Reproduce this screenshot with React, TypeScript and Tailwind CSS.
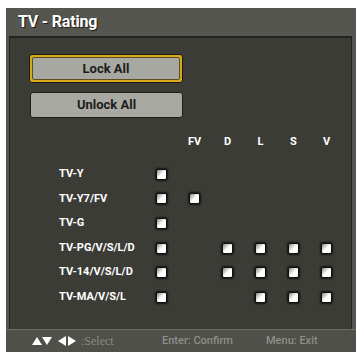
import React from "react";

const font = { fontFamily: '"Roboto", "Liberation Sans", sans-serif' };

function Box() {
  return (
    <div className="w-[11px] h-[11px] rounded-[2px] border border-[#111110] bg-gradient-to-br from-[#8a8a88] via-white to-white shadow-[0_0_2px_1px_rgba(0,0,0,0.7)]" />
  );
}

function Tri({ dir }: { dir: "up" | "down" | "left" | "right" }) {
  const pts =
    dir === "up"
      ? "0,9 5,1 10,9"
      : dir === "down"
      ? "0,1 10,1 5,9"
      : dir === "left"
      ? "9,0 9,10 1,5"
      : "1,0 1,10 9,5";
  return (
    <svg width="10" height="10" viewBox="0 0 10 10" className="block">
      <polygon points={pts} fill="#ffffff" />
    </svg>
  );
}

const rows: { label: string; cols: boolean[] }[] = [
  { label: "TV-Y", cols: [true, false, false, false, false, false] },
  { label: "TV-Y7/FV", cols: [true, true, false, false, false, false] },
  { label: "TV-G", cols: [true, false, false, false, false, false] },
  { label: "TV-PG/V/S/L/D", cols: [true, false, true, true, true, true] },
  { label: "TV-14/V/S/L/D", cols: [true, false, true, true, true, true] },
  { label: "TV-MA/V/S/L", cols: [true, false, false, true, true, true] },
];

const heads = ["", "", "FV", "D", "L", "S", "V"];

export default function App() {
  return (
    <div className="w-[356px] h-[354px] bg-white pt-[8px] pl-[6px]" style={font}>
      <div className="w-[350px] h-[344px] bg-[#55564f] flex flex-col">
        <div className="h-[28px] pl-[12px] flex items-center text-white font-bold text-[16px] tracking-[-0.2px] [text-shadow:1px_1px_1px_rgba(0,0,0,0.7)]">
          TV - Rating
        </div>
        <div className="ml-[3px] w-[343px] h-[293px] bg-[#3c3c37] border-t-2 border-l border-r border-[#232320] flex flex-col">
          <div className="pl-[19px] pt-[16px] flex flex-col">
            <div className="w-[154px] h-[29px] rounded-[3px] border border-[#1a1a14] bg-[#d9a91c] p-[2px]">
              <div className="w-full h-full rounded-[2px] bg-[#a7a8a2] flex items-center justify-center text-[13px] font-bold text-[#1c1c1a] border border-[#5a5020]">
                Lock All
              </div>
            </div>
            <div className="mt-[9px] ml-[1px] w-[153px] h-[26px] rounded-[3px] border border-[#1f1f1c] bg-[#a8a9a3] flex items-center justify-center text-[13px] font-bold text-[#1c1c1a]">
              Unlock All
            </div>
          </div>
          <div className="mt-[14px] ml-[48px] grid grid-cols-[87px_repeat(6,33px)]">
            {heads.map((h, i) => (
              <div key={i} className="h-[20px] flex items-center justify-center text-white font-bold text-[11px]">
                {h}
              </div>
            ))}
          </div>
          <div className="mt-[10px] ml-[48px] flex flex-col">
            {rows.map((r) => (
              <div key={r.label} className="h-[24.6px] grid grid-cols-[87px_repeat(6,33px)] items-center">
                <div className="pl-[1px] text-white font-bold text-[11px] whitespace-nowrap">{r.label}</div>
                {r.cols.map((c, i) => (
                  <div key={i} className="flex justify-center">
                    {c ? <Box /> : null}
                  </div>
                ))}
              </div>
            ))}
          </div>
        </div>
        <div className="flex-1 border-t border-[#6b6c64] bg-[#4f5049] flex items-center pl-[26px] text-[11px] font-medium text-[#8e8f87]">
          <div className="w-[130px] flex items-center">
            <Tri dir="up" />
            <Tri dir="down" />
            <div className="w-[5px]" />
            <Tri dir="left" />
            <Tri dir="right" />
            <span className="ml-[4px] text-[12px] text-[#8a8b83]" style={{ fontFamily: '"Liberation Serif", serif' }}>:Select</span>
          </div>
          <div className="w-[104px]">Enter: Confirm</div>
          <div>Menu: Exit</div>
        </div>
      </div>
    </div>
  );
}
